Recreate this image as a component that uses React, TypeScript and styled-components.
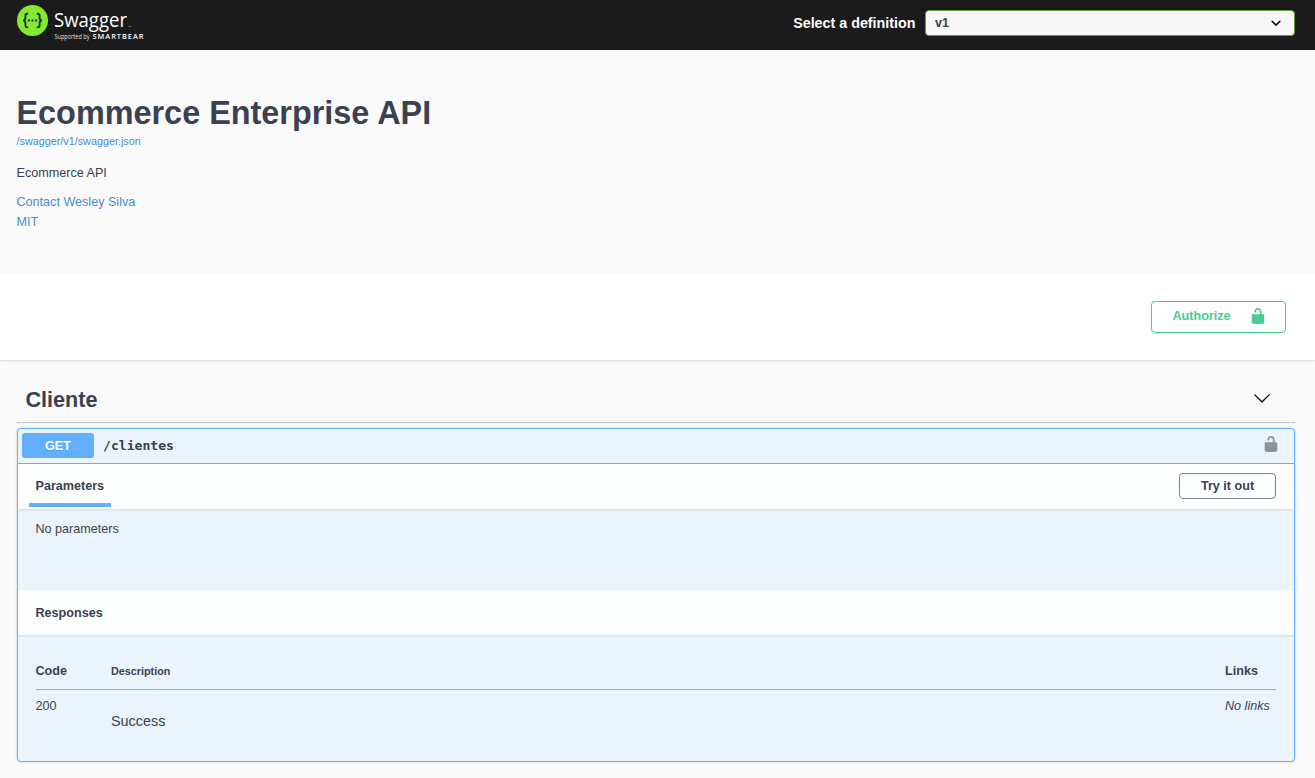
import React from 'react';
import styled, { createGlobalStyle } from 'styled-components';

const GlobalStyle = createGlobalStyle`
  *, *::before, *::after { box-sizing: border-box; }
  body {
    margin: 0;
    background: #fafafa;
    color: #3b4151;
    font-family: "Liberation Sans", Arial, sans-serif;
    font-size: 12.6px;
  }
  h1, h2, h3, h4, p { margin: 0; }
  a { color: #4a8add; text-decoration: none; }
`;

const Page = styled.div`
  min-height: 778px;
  overflow: hidden;
`;

const Topbar = styled.header`
  display: flex;
  justify-content: space-between;
  align-items: flex-start;
  height: 50px;
  padding: 0 20px 0 16px;
  background: #1b1b1b;
`;

const Definition = styled.label`
  display: flex;
  align-items: center;
  gap: 9.5px;
  margin-top: 10px;
  color: #fff;
  font-size: 14.3px;
  font-weight: 700;
`;

const SelectBox = styled.span`
  display: flex;
  justify-content: space-between;
  align-items: center;
  width: 370px;
  height: 26px;
  padding: 0 8px 0 9px;
  border: 1px solid #62a03f;
  border-radius: 4px;
  background: #f7f7f7;
  color: #3b4151;
  font-size: 12.6px;
  line-height: 22px;
`;

const Info = styled.section`
  height: 224px;
  padding: 45px 16.5px 0;
`;

const Title = styled.h1`
  font-size: 32.4px;
  line-height: 37px;
`;

const SpecLink = styled.a`
  display: block;
  font-size: 10.8px;
  line-height: 18px;
`;

const Description = styled.p`
  margin-top: 13px;
  line-height: 20px;
`;

const Links = styled.div`
  display: flex;
  flex-direction: column;
  align-items: flex-start;
  margin-top: 9px;
  line-height: 20px;
`;

const Scheme = styled.section`
  display: flex;
  justify-content: flex-end;
  height: 86px;
  padding: 27px 29px 0 0;
  background: #fff;
  box-shadow: 0 1px 2px rgba(0, 0, 0, 0.15);
`;

const Button = styled.button<{ $tone?: 'green' }>`
  display: flex;
  align-items: center;
  justify-content: ${p => (p.$tone ? 'space-between' : 'center')};
  width: ${p => (p.$tone ? 135 : 97)}px;
  height: ${p => (p.$tone ? 32 : 26)}px;
  padding: ${p => (p.$tone ? '0 18px 2px 20.5px' : '0 0 1px')};
  border: 1px solid ${p => (p.$tone ? '#49cc90' : '#808080')};
  border-radius: 4px;
  background: transparent;
  color: ${p => (p.$tone ? '#49cc90' : '#3b4151')};
  font-family: inherit;
  font-size: 12.6px;
  font-weight: 700;
`;

const TagSection = styled.section`
  padding: 17px 20px 0 17px;
`;

const TagHeader = styled.div`
  display: flex;
  justify-content: space-between;
  align-items: flex-start;
  height: 46px;
  padding: 9px 24px 0 8.5px;
  border-bottom: 1px solid rgba(59, 65, 81, 0.3);
`;

const TagName = styled.h2`
  font-size: 21.6px;
  line-height: 28px;
`;

const Chevron = styled.svg`
  margin-top: 3px;
`;

const Operation = styled.article`
  height: 334px;
  margin-top: 5px;
  border: 1px solid #61affe;
  border-radius: 4px;
  background: #ebf3fb;
  box-shadow: 0 0 3px rgba(0, 0, 0, 0.19);
`;

const Summary = styled.div`
  display: flex;
  align-items: flex-start;
  height: 35px;
  padding: 4px 14px 0 4px;
  border-bottom: 1px solid #61affe;
`;

const Method = styled.span`
  width: 72px;
  height: 25px;
  border-radius: 3px;
  background: #61affe;
  color: #fff;
  font-weight: 700;
  line-height: 26px;
  text-align: center;
  text-shadow: 0 1px 0 rgba(0, 0, 0, 0.1);
`;

const Path = styled.span`
  flex: 1;
  padding-left: 9px;
  font-family: "DejaVu Sans Mono", monospace;
  font-size: 13.1px;
  font-weight: 700;
  line-height: 25px;
`;

const LockSlot = styled.span`
  display: flex;
  padding-top: 2px;
`;

const SectionHeader = styled.div`
  display: flex;
  justify-content: space-between;
  height: 45px;
  padding: 0 18px 0 11px;
  background: rgba(255, 255, 255, 0.85);
  box-shadow: 0 1px 2px rgba(0, 0, 0, 0.1);
`;

const HeaderAction = styled.div`
  padding-top: 9px;
`;

const Tab = styled.h4<{ $active?: boolean }>`
  height: 43px;
  padding: 0 6.5px;
  border-bottom: ${p => (p.$active ? '4px solid #61affe' : 'none')};
  font-size: 12.6px;
  line-height: ${p => (p.$active ? 44 : 46)}px;
`;

const NoParameters = styled.p`
  height: 81px;
  padding: 10px 17.5px;
  line-height: 20px;
`;

const ResponseTable = styled.div`
  padding: 23px 18px 0 17.5px;
`;

const ResponseRow = styled.div<{ $head?: boolean }>`
  display: grid;
  grid-template-columns: 75.5px 1fr 51px;
  height: ${p => (p.$head ? 32 : 50)}px;
  border-bottom: ${p => (p.$head ? '1px solid rgba(59, 65, 81, 0.4)' : 'none')};
  font-weight: ${p => (p.$head ? 700 : 400)};
  line-height: ${p => (p.$head ? 26 : 32)}px;
`;

const SmallHeading = styled.span`
  font-size: 10.8px;
`;

const ResponseText = styled.p`
  padding-top: 15px;
  font-size: 14.4px;
`;

function Unlock({ color }: { color: string }) {
  return (
    <svg width="18" height="18" viewBox="0 0 20 20" fill={color}>
      <path d="M15.8 8H14V5.6C14 2.703 12.665 1 10 1 7.334 1 6 2.703 6 5.6V6h2v-.801C8 3.754 8.797 3 10 3c1.203 0 2 .754 2 2.199V8H4c-.553 0-1 .646-1 1.199V17c0 .549.428 1.139.951 1.307l1.197.387C5.672 18.861 6.55 19 7.1 19h5.8c.549 0 1.428-.139 1.951-.307l1.196-.387c.524-.167.953-.757.953-1.306V9.199C17 8.646 16.352 8 15.8 8z" />
    </svg>
  );
}

function Logo() {
  return (
    <svg width="130" height="46" viewBox="16 0 130 46">
      <circle cx="32.5" cy="20.5" r="15.5" fill="#85ea2d" />
      <g fill="none" stroke="#173647" strokeWidth="1.9">
        <path d="M28.2 13.7h-1.1q-1.7 0-1.7 1.8v2.6q0 2.2-2.2 2.4q2.2.2 2.2 2.4v2.6q0 1.8 1.7 1.8h1.1" />
        <path d="M36.8 13.7h1.1q1.7 0 1.7 1.8v2.6q0 2.2 2.2 2.4q-2.2.2-2.2 2.4v2.6q0 1.8-1.7 1.8h-1.1" />
      </g>
      <g fill="#173647">
        <circle cx="28.9" cy="20.5" r="1.15" />
        <circle cx="32.5" cy="20.5" r="1.15" />
        <circle cx="36.1" cy="20.5" r="1.15" />
      </g>
      <g fill="#fff" fontFamily="'Open Sans', sans-serif">
        <text x="54" y="27" fontSize="20.5" textLength="73" lengthAdjust="spacingAndGlyphs">Swagger</text>
        <text x="128.5" y="26.5" fontSize="1.6">TM</text>
        <text x="54.5" y="39.2" fontSize="6.2" fillOpacity=".9" textLength="35" lengthAdjust="spacingAndGlyphs">Supported by</text>
        <text x="92.5" y="39.4" fontSize="7.4" fontWeight="600" textLength="51" lengthAdjust="spacing">SMARTBEAR</text>
      </g>
    </svg>
  );
}

export default function App() {
  return (
    <Page>
      <GlobalStyle />
      <Topbar>
        <Logo />
        <Definition>
          Select a definition
          <SelectBox>
            v1
            <svg width="20" height="20" viewBox="0 0 20 20">
              <path d="M13.418 7.859a.695.695 0 01.978 0 .68.68 0 010 .969l-3.908 3.83a.697.697 0 01-.979 0l-3.908-3.83a.68.68 0 010-.969.695.695 0 01.978 0L10 11l3.418-3.141z" />
            </svg>
          </SelectBox>
        </Definition>
      </Topbar>
      <Info>
        <Title>Ecommerce Enterprise API</Title>
        <SpecLink>/swagger/v1/swagger.json</SpecLink>
        <Description>Ecommerce API</Description>
        <Links>
          <a>Contact Wesley Silva</a>
          <a>MIT</a>
        </Links>
      </Info>
      <Scheme>
        <Button $tone="green">
          <span>Authorize</span>
          <Unlock color="#49cc90" />
        </Button>
      </Scheme>
      <TagSection>
        <TagHeader>
          <TagName>Cliente</TagName>
          <Chevron width="18" height="18" viewBox="0 0 20 20">
            <path d="M17.418 6.109c.272-.268.709-.268.979 0s.271.701 0 .969l-7.908 7.83c-.27.268-.707.268-.979 0l-7.908-7.83c-.27-.268-.271-.701 0-.969.271-.268.709-.268.979 0L10 13.25l7.418-7.141z" />
          </Chevron>
        </TagHeader>
        <Operation>
          <Summary>
            <Method>GET</Method>
            <Path>/clientes</Path>
            <LockSlot>
              <Unlock color="#8d9297" />
            </LockSlot>
          </Summary>
          <SectionHeader>
            <Tab $active>Parameters</Tab>
            <HeaderAction>
              <Button>Try it out</Button>
            </HeaderAction>
          </SectionHeader>
          <NoParameters>No parameters</NoParameters>
          <SectionHeader>
            <Tab>Responses</Tab>
          </SectionHeader>
          <ResponseTable>
            <ResponseRow $head>
              <span>Code</span>
              <SmallHeading>Description</SmallHeading>
              <span>Links</span>
            </ResponseRow>
            <ResponseRow>
              <span>200</span>
              <ResponseText>Success</ResponseText>
              <i>No links</i>
            </ResponseRow>
          </ResponseTable>
        </Operation>
      </TagSection>
    </Page>
  );
}
